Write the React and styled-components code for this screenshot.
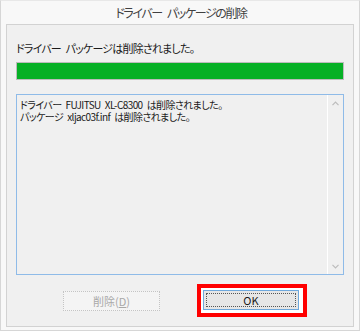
import React from "react";
import styled, { createGlobalStyle } from "styled-components";

const Global = createGlobalStyle`
  html, body { margin: 0; padding: 0; background: #ffffff; }
  body { font-family: "Noto Sans CJK JP", "Noto Sans", sans-serif; }
`;

const Window = styled.div`
  box-sizing: border-box;
  width: 360px;
  height: 331px;
  background: #f8f8f8;
  border: 1px solid #d6d6d6;
  border-top-color: #e8e8e8;
  display: flex;
  flex-direction: column;
  font-feature-settings: "palt";
`;

const TitleBar = styled.div`
  height: 23px;
  display: flex;
  align-items: center;
  justify-content: center;
  font-size: 12px;
  letter-spacing: -1.4px;
  word-spacing: 4px;
  color: #404040;
  padding-left: 2px;
`;

const Client = styled.div`
  box-sizing: border-box;
  margin: 0 5px 0 5px;
  height: 303px;
  background: #f0f0f0;
  border: 1px solid #d2d2d2;
  display: flex;
  flex-direction: column;
  padding: 0 9px 0 9px;
`;

const Label = styled.div`
  margin-top: 16px;
  height: 14px;
  line-height: 14px;
  font-size: 11px;
  letter-spacing: -0.8px;
  word-spacing: 3px;
  color: #1a1a1a;
`;

const Progress = styled.div`
  box-sizing: border-box;
  margin-top: 7px;
  height: 18px;
  width: 328px;
  background: #06b025;
  border: 1px solid #bcbcbc;
`;

const TextBox = styled.div`
  box-sizing: border-box;
  margin-top: 14px;
  width: 328px;
  height: 181px;
  border: 1px solid #8fbbe8;
  background: #f0f0f0;
  display: flex;
`;

const TextContent = styled.div`
  flex: 1;
  padding: 4px 0 0 3px;
  display: flex;
  flex-direction: column;
`;

const Line = styled.div`
  height: 11.5px;
  line-height: 11.5px;
  font-size: 10px;
  letter-spacing: -0.6px;
  word-spacing: 2.5px;
  color: #1a1a1a;
  white-space: nowrap;
`;

const ScrollBar = styled.div`
  width: 15px;
  border-left: 1px solid #ffffff;
  display: flex;
  flex-direction: column;
  justify-content: space-between;
  align-items: center;
  padding: 6px 0 5px 0;
`;

const Arrow = ({ down }) => (
  <svg width="7" height="5" viewBox="0 0 7 5">
    <path
      d={down ? "M0.5 0.8 L3.5 3.8 L6.5 0.8" : "M0.5 4.2 L3.5 1.2 L6.5 4.2"}
      fill="none"
      stroke="#bcbcbc"
      strokeWidth="1.2"
    />
  </svg>
);

const ButtonRow = styled.div`
  display: flex;
  align-items: center;
  margin-top: 9px;
  padding-left: 47px;
  gap: 37px;
`;

const Button = styled.div`
  box-sizing: border-box;
  width: ${(p) => p.w}px;
  height: 20px;
  display: flex;
  align-items: center;
  justify-content: center;
  font-size: 11px;
  color: ${(p) => (p.disabled ? "#a8a8a8" : "#1a1a1a")};
  background: ${(p) => (p.disabled ? "#f4f4f4" : "#e6e6e6")};
  border: 1px ${(p) => (p.disabled ? "dotted #c4c4c4" : "solid #6fa8dc")};
  position: relative;
`;

const FocusRect = styled.div`
  position: absolute;
  inset: 2px;
  border: 1px dotted #555;
`;

const Highlight = styled.div`
  border: 4px solid #ff0000;
  padding: 2px 4px 3px 2px;
  background: #ffffff;
`;

const U = styled.span`
  text-decoration: underline;
`;

export default function App() {
  return (
    <>
      <Global />
      <Window>
        <TitleBar>ドライバー パッケージの削除</TitleBar>
        <Client>
          <Label>ドライバー パッケージは削除されました。</Label>
          <Progress />
          <TextBox>
            <TextContent>
              <Line>ドライバー FUJITSU XL-C8300 は削除されました。</Line>
              <Line>パッケージ xljac03f.inf は削除されました。</Line>
            </TextContent>
            <ScrollBar>
              <Arrow />
              <Arrow down />
            </ScrollBar>
          </TextBox>
          <ButtonRow>
            <Button w={97} disabled>
              削除(<U>D</U>)
            </Button>
            <Highlight>
              <Button w={96}>
                <FocusRect />
                OK
              </Button>
            </Highlight>
          </ButtonRow>
        </Client>
      </Window>
    </>
  );
}
